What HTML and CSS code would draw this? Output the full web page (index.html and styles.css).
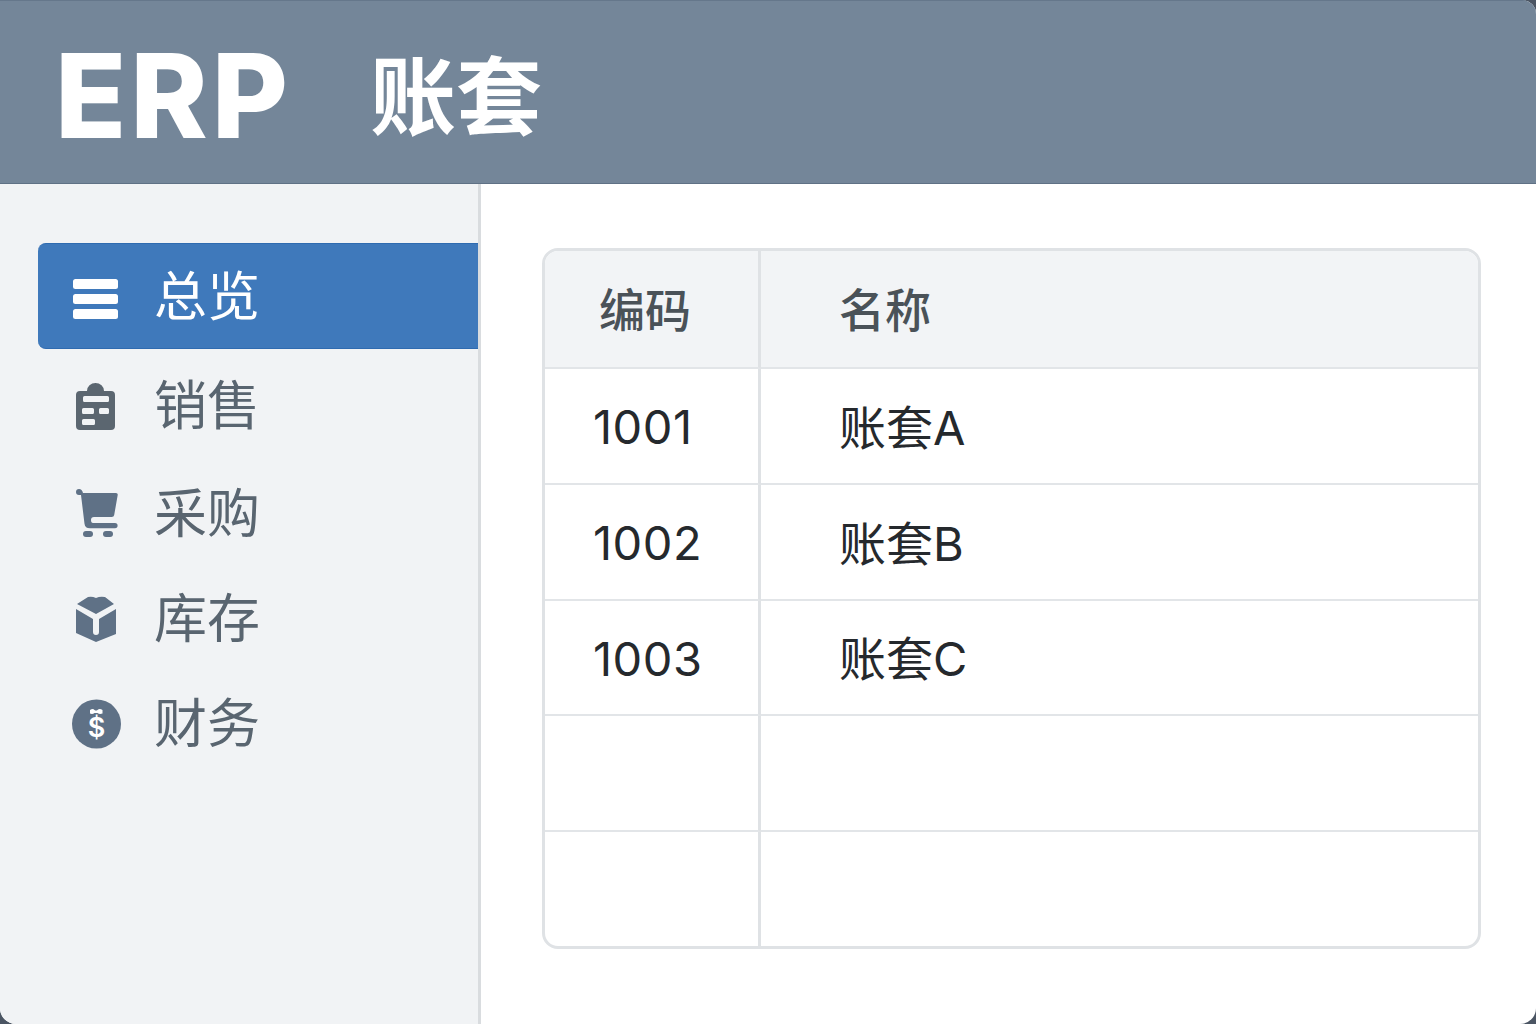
FILE: index.html
```html
<!DOCTYPE html>
<html lang="zh-CN">
<head>
<meta charset="utf-8">
<title>ERP 账套</title>
<link rel="stylesheet" href="styles.css">
</head>
<body>
<div class="app">
  <header class="topbar">
    <span class="brand">ERP</span>
    <span class="title">账套</span>
  </header>
  <div class="body">
    <nav class="sidebar">
      <a class="nav-item active">
        <svg class="icon" viewBox="0 0 50 56"><rect x="2" y="11" width="45" height="10" rx="2.500"/><rect x="2" y="26" width="45" height="10" rx="2.500"/><rect x="2" y="41" width="45" height="10" rx="2.500"/></svg>
        <span class="label">总览</span>
      </a>
      <a class="nav-item">
        <svg class="icon icon-dark" viewBox="0 0 50 56"><path fill-rule="evenodd" d="M16 14a8.500 8 0 0 1 17 0h7a4 4 0 0 1 4 4v31a4 4 0 0 1-4 4H9a4 4 0 0 1-4-4V18a4 4 0 0 1 4-4zM13.500 19a1.500 1.500 0 0 0-1.500 1.500v3a1.500 1.500 0 0 0 1.500 1.500h23a1.500 1.500 0 0 0 1.500-1.500v-3a1.500 1.500 0 0 0-1.500-1.500zM12.500 31a1.500 1.500 0 0 0-1.500 1.500v3a1.500 1.500 0 0 0 1.500 1.500h9a1.500 1.500 0 0 0 1.500-1.500v-3a1.500 1.500 0 0 0-1.500-1.500zM29.500 31a1.500 1.500 0 0 0-1.500 1.500v3a1.500 1.500 0 0 0 1.500 1.500h7a1.500 1.500 0 0 0 1.500-1.500v-3a1.500 1.500 0 0 0-1.500-1.500zM12.500 42a1.500 1.500 0 0 0-1.500 1.500v3a1.500 1.500 0 0 0 1.500 1.500h10a1.500 1.500 0 0 0 1.500-1.500v-3a1.500 1.500 0 0 0-1.500-1.500z"/></svg>
        <span class="label">销售</span>
      </a>
      <a class="nav-item">
        <svg class="icon" viewBox="0 0 50 56"><path d="M5 7a3 3 0 0 1 3-3q3 0 4 4h33q2 0 1.700 2l-3.500 20q-.3 2-2.500 2H23q-3 0-3 3t2 3h22a2.600 2.600 0 0 1 0 5.200H19q-5 0-5.500-4.500L10 10H8a3 3 0 0 1-3-3z"/><rect x="12" y="46" width="10" height="6" rx="3"/><rect x="32" y="46" width="10" height="6" rx="3"/></svg>
        <span class="label">采购</span>
      </a>
      <a class="nav-item">
        <svg class="icon" viewBox="0 0 50 56"><path d="M6 14L17 7Q21 6 25 8Q29 6 34 7L43 14L25 24Z"/><path d="M5 19L22 29V42a3 3 0 0 0 6 0V29L45 19V44L25 52L5 43Z"/></svg>
        <span class="label">库存</span>
      </a>
      <a class="nav-item">
        <svg class="icon" viewBox="0 0 50 56"><circle cx="25.500" cy="29" r="24.500"/><path class="coin-mark" d="M19 15q3-2 4.500 0q1.500 1 3 0q2-2 5 0v3.500q-3 1-5-.5h-3q-2 1.500-4.500.5z"/><text class="coin-sign" x="25.500" y="42" text-anchor="middle">$</text></svg>
        <span class="label">财务</span>
      </a>
    </nav>
    <main class="content">
      <table class="grid">
        <thead>
          <tr><th class="code">编码</th><th class="name">名称</th></tr>
        </thead>
        <tbody>
          <tr><td class="code">1001</td><td class="name">账套A</td></tr>
          <tr><td class="code">1002</td><td class="name">账套B</td></tr>
          <tr><td class="code">1003</td><td class="name">账套C</td></tr>
          <tr><td class="code"></td><td class="name"></td></tr>
          <tr><td class="code"></td><td class="name"></td></tr>
        </tbody>
      </table>
    </main>
  </div>
</div>
</body>
</html>
```

FILE: styles.css
```css
* { box-sizing: border-box; }
html, body { margin: 0; height: 100%; }
body {
  background: #4b5563;
  font-family: Inter, "Noto Sans CJK SC", sans-serif;
}
.app {
  width: 1536px;
  height: 1024px;
  display: flex;
  flex-direction: column;
  background: #fff;
  border-radius: 0 14px 16px 16px;
  overflow: hidden;
}
.topbar {
  height: 184px;
  flex: none;
  display: flex;
  align-items: center;
  padding-left: 55px;
  gap: 78px;
  background: #748699;
  border-top: 1px solid #65778b;
  border-bottom: 1px solid #5f7185;
  color: #fff;
}
.brand {
  font-size: 117px;
  font-weight: 800;
  line-height: 1;
  letter-spacing: 4px;
  margin-top: 6px;
}
.title {
  font-size: 86px;
  font-weight: 700;
  line-height: 1;
  font-family: "Noto Sans CJK SC", sans-serif;
}
.body {
  flex: 1;
  display: flex;
  min-height: 0;
}
.sidebar {
  width: 481px;
  flex: none;
  padding: 59px 0 0 38px;
  background: #f1f3f5;
  border-right: 3px solid #d9dcdf;
}
.nav-item {
  height: 106px;
  display: flex;
  align-items: center;
  padding-left: 33px;
  gap: 33px;
  color: #596570;
  font-size: 53px;
  font-family: "Noto Sans CJK SC", sans-serif;
  font-weight: 400;
}
.nav-item:nth-child(2) { height: 112px; }
.nav-item:nth-child(3) { height: 104px; }
.nav-item:nth-child(5) { height: 104px; }
.nav-item.active {
  background: #3f79bb;
  color: #fff;
  border-radius: 8px 0 0 8px;
  border-top: 1px solid #2f6bb0;
  border-bottom: 1px solid #2f6bb0;
}
.label { margin-bottom: 6px; }
.icon {
  width: 50px;
  height: 56px;
  flex: none;
  fill: #5f7186;
}
.active .icon { fill: #fff; }
.icon-dark { fill: #5b6670; }
.coin-mark { fill: #fff; }
.coin-sign {
  fill: #fff;
  font-family: Inter, sans-serif;
  font-size: 27px;
  font-weight: 600;
}
.content {
  flex: 1;
  padding: 64px 55px 0 61px;
}
.grid {
  width: 939px;
  height: 700px;
  table-layout: fixed;
  border-collapse: separate;
  border-spacing: 0;
  border: 3px solid #dfe2e5;
  border-radius: 16px;
  font-size: 47px;
  color: #25292d;
}
.grid th, .grid td {
  padding: 0;
  font-weight: 400;
  border-bottom: 2px solid #e2e5e8;
}
.grid tbody tr:last-child td { border-bottom: 0; }
.grid th {
  background: #f2f4f6;
  color: #4a5258;
  height: 118px;
  padding-bottom: 5px;
  font-family: "Noto Sans CJK SC", sans-serif;
  font-size: 46px;
  font-weight: 500;
}
.grid thead th:first-child { border-top-left-radius: 13px; }
.grid thead th:last-child { border-top-right-radius: 13px; }
.grid td { height: 116px; }
.grid tbody tr:nth-child(3) td { height: 115px; }
.grid tbody tr:nth-child(5) td { height: 114px; }
.code {
  width: 216px;
  text-align: left;
  border-right: 3px solid #dfe2e5;
}
.grid th.code { padding-left: 54px; }
.grid td.code { padding: 1px 0 0 48px; letter-spacing: 0.5px; }
.grid .name {
  text-align: left;
  padding-left: 78px;
}
.grid td.name { padding-bottom: 4px; }
```
